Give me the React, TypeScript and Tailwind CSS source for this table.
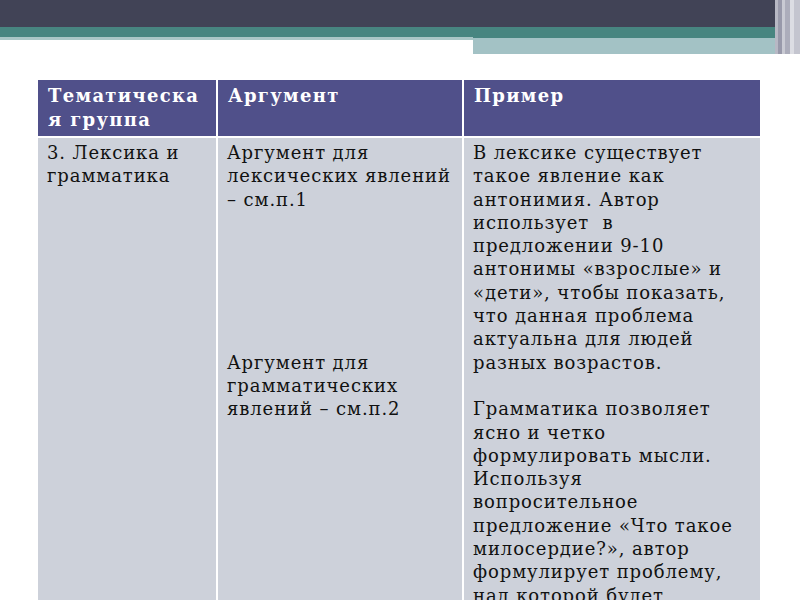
const serif = { fontFamily: '"DejaVu Serif", "Liberation Serif", serif' };

function TopBand() {
  return (
    <div className="flex w-full">
      <div className="flex-1">
        <div className="h-[27px] bg-[#414356]" />
        <div className="h-[10px] bg-[#478580]" />
        <div className="flex">
          <div className="w-[473px] h-[3px] bg-[#a9c6c6]" />
          <div className="flex-1 flex flex-col">
            <div className="h-[1px] bg-[#478580]" />
            <div className="h-[16px] bg-[#a3c2c5]" />
          </div>
        </div>
      </div>
      <div className="flex h-[54px]">
        <div className="w-[3px] bg-[#b7b8c4]" />
        <div className="w-[4px] bg-[#9899aa]" />
        <div className="w-[3px] bg-[#c9cad3]" />
        <div className="w-[5px] bg-[#acadbb]" />
        <div className="w-[4px] bg-[#dcdde3]" />
        <div className="w-[6px] bg-[#c4c5cf]" />
      </div>
    </div>
  );
}

function HeadCell({ children }: { children: React.ReactNode }) {
  return (
    <div className="bg-[#50508a] text-white font-bold text-[18px] leading-[24px] tracking-[1.3px] pl-[10px] pt-[4px] h-[56px]">
      {children}
    </div>
  );
}

function BodyCell({ children }: { children: React.ReactNode }) {
  return (
    <div className="bg-[#cdd1da] text-[#111] text-[18px] leading-[23.3px] tracking-[0.9px] pl-[9px] pt-[3px]">
      {children}
    </div>
  );
}

export default function App() {
  return (
    <div className="w-[800px] h-[600px] overflow-hidden bg-white" style={serif}>
      <TopBand />
      <div className="pl-[38px] pt-[26px]">
        <div className="grid grid-cols-[178px_244px_296px] gap-[2px] h-[560px] grid-rows-[56px_1fr]">
          <HeadCell>
            Тематическа
            <br />я группа
          </HeadCell>
          <HeadCell>Аргумент</HeadCell>
          <HeadCell>Пример</HeadCell>
          <BodyCell>
            3. Лексика и
            <br />
            грамматика
          </BodyCell>
          <BodyCell>
            <p>
              Аргумент для
              <br />
              лексических явлений
              <br />– см.п.1
            </p>
            <p className="mt-[139.8px]">
              Аргумент для
              <br />
              грамматических
              <br />
              явлений – см.п.2
            </p>
          </BodyCell>
          <BodyCell>
            <p>
              В лексике существует
              <br />
              такое явление как
              <br />
              антонимия. Автор
              <br />
              использует&nbsp; в
              <br />
              предложении 9-10
              <br />
              антонимы «взрослые» и
              <br />
              «дети», чтобы показать,
              <br />
              что данная проблема
              <br />
              актуальна для людей
              <br />
              разных возрастов.
            </p>
            <p className="mt-[23.3px]">
              Грамматика позволяет
              <br />
              ясно и четко
              <br />
              формулировать мысли.
              <br />
              Используя
              <br />
              вопросительное
              <br />
              предложение «Что такое
              <br />
              милосердие?», автор
              <br />
              формулирует проблему,
              <br />
              над которой будет
            </p>
          </BodyCell>
        </div>
      </div>
    </div>
  );
}
